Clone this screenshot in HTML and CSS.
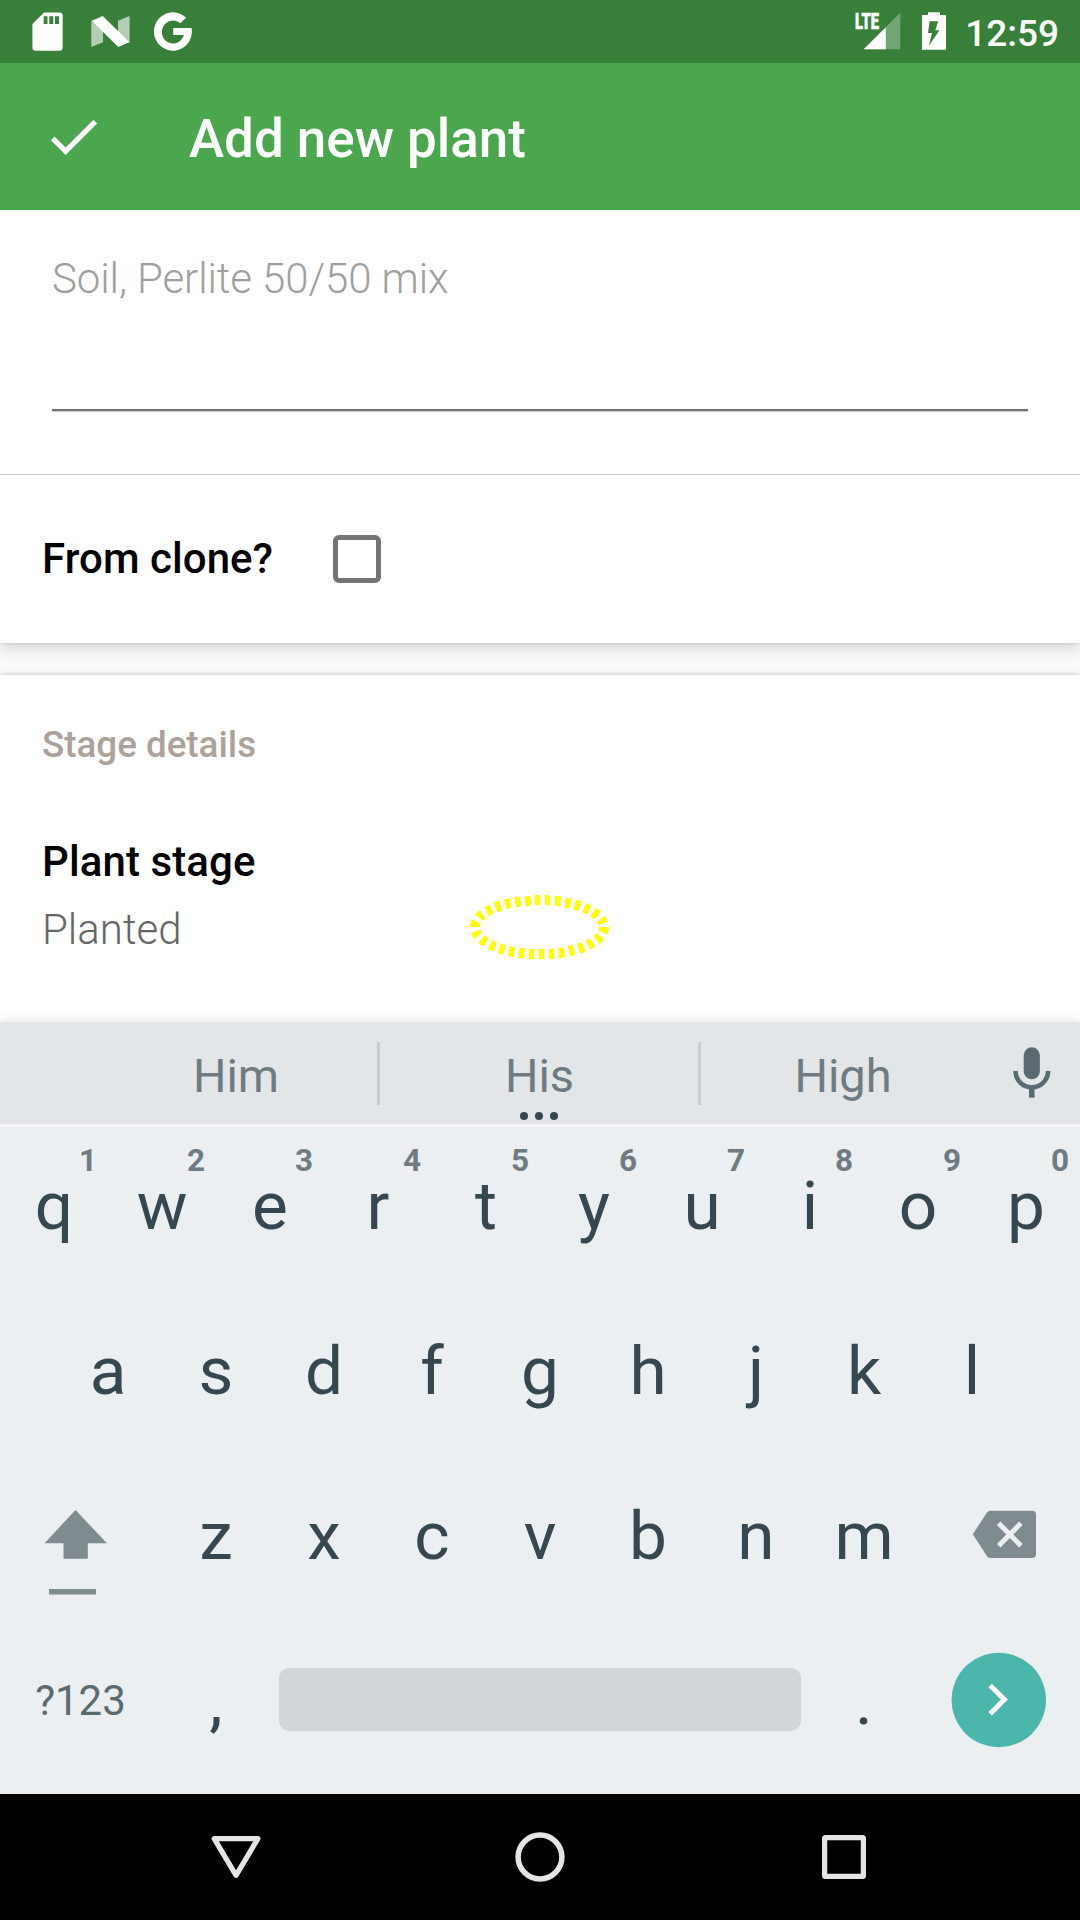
FILE: index.html
```html
<!DOCTYPE html>
<html lang="en">
<head>
<meta charset="utf-8">
<title>Add new plant</title>
<link rel="stylesheet" href="styles.css">
</head>
<body>
<div class="screen">
  <header class="status">
    <div class="status-left">
      <svg width="31" height="40" viewBox="32 12 31 40"><path fill="#fff" fill-rule="evenodd" d="M44 12.4H59.5a3.2 3.2 0 0 1 3.2 3.2V47.500a3.200 3.200 0 0 1-3.200 3.200H35.600a3.200 3.200 0 0 1-3.200-3.200V24zM43.700 16.300V24h3.800v-7.700zM49.300 16.300V24h4v-7.700zM55 16.300V24h4v-7.700z"/></svg>
      <svg class="ic-n" width="39" height="40" viewBox="91 12 39 40"><path fill="#fff" fill-opacity=".62" d="M91.300 20.500 103 30V42.200L91.300 47zM118 20.700 129.600 16V42.500L118 33z"/><path fill="#fff" d="M91.800 20.700 102.700 16 129.500 42.200 118.200 47z"/></svg>
      <svg class="ic-g" width="38" height="40" viewBox="154 12 38 40"><path fill="#fff" d="M186.100 17.700A19 19.200 0 1 0 191.900 32Q191.900 30 191.600 28H173.200V35H183.900A11.200 11.500 0 1 1 180.400 23.300z"/></svg>
    </div>
    <div class="status-right">
      <svg class="ic-signal" width="46" height="40" viewBox="855 12 46 40"><path fill="#fff" fill-opacity=".3" d="M863.700 49.300 900.300 12.700V49.300z"/><path fill="#fff" d="M863.700 49.300 885.800 27.200V49.300z"/><text class="lte" x="855" y="29" textLength="24" lengthAdjust="spacingAndGlyphs">LTE</text></svg>
      <svg class="ic-bat" width="24" height="40" viewBox="922 12 24 40"><path fill="#fff" fill-rule="evenodd" d="M928 12.300H940V15H946V49.700H922V15H928zM929.600 21.300 928 33H932L928.900 45.700 939.400 30.300H935.300L938.200 21.300z"/></svg>
      <span class="clock">12:59</span>
    </div>
  </header>
  <div class="appbar">
    <svg width="63" height="63" viewBox="0 0 24 24"><path fill="#fff" d="M9 16.170 4.830 12l-1.420 1.410L9 19 21 7l-1.410-1.410z"/></svg>
    <h1>Add new plant</h1>
  </div>
  <main class="content">
    <section class="card card-general">
      <div class="field"><span>Soil, Perlite 50/50 mix</span></div>
      <div class="clone"><span>From clone?</span><i class="checkbox"></i></div>
    </section>
    <section class="card card-stage">
      <h2>Stage details</h2>
      <div class="label">Plant stage</div>
      <div class="value">Planted</div>
    </section>
    <svg class="marker" width="142" height="68" viewBox="469 893 142 68" shape-rendering="crispEdges"><ellipse cx="539.500" cy="927.200" rx="64.500" ry="27" fill="none" stroke="#ff0" stroke-width="10" stroke-dasharray="5.300 4.700"/></svg>
  </main>
  <div class="keyboard">
    <div class="suggest">
      <span>Him</span><span class="mid">His<svg class="dots" width="40" height="10" viewBox="0 0 40 10"><g fill="#37474f"><circle cx="5" cy="5" r="4"/><circle cx="20" cy="5" r="4"/><circle cx="35" cy="5" r="4"/></g></svg></span><span>High</span>
      <svg class="mic" width="38" height="52" viewBox="1013 1046 38 52"><rect x="1023.700" y="1047.300" width="16.200" height="32" rx="8.100" fill="#5b6a70"/><path fill="none" stroke="#5b6a70" stroke-width="4.600" d="M1015.500 1071a16.300 16.300 0 0 0 32.600 0"/><path fill="#5b6a70" d="M1029 1087h5.600v10.700H1029z"/></svg>
    </div>
    <div class="row row-top">
      <span>q<sup>1</sup></span><span>w<sup>2</sup></span><span>e<sup>3</sup></span><span>r<sup>4</sup></span><span>t<sup>5</sup></span><span>y<sup>6</sup></span><span>u<sup>7</sup></span><span>i<sup>8</sup></span><span>o<sup>9</sup></span><span>p<sup>0</sup></span>
    </div>
    <div class="row row-home">
      <span>a</span><span>s</span><span>d</span><span>f</span><span>g</span><span>h</span><span>j</span><span>k</span><span>l</span>
    </div>
    <div class="row row-low">
      <svg width="162" height="165" viewBox="0 1453 162 165"><path fill="#808b8f" d="M75.500 1510 106.900 1543.200H87.800V1558.700H63.500V1543.200H44.500zM49 1589H96v5.500H49z"/></svg>
      <span>z</span><span>x</span><span>c</span><span>v</span><span>b</span><span>n</span><span>m</span>
      <svg width="162" height="165" viewBox="918 1453 162 165"><path fill="#808b8f" d="M972.800 1534.300 987 1512.500Q988.300 1510.700 990.500 1510.700H1032a4 4 0 0 1 4 4V1554a4 4 0 0 1-4 4H990.500Q988.300 1558 987 1556.200z"/><path fill="none" stroke="#ebeff2" stroke-width="5" d="M998.700 1523.300 1020.900 1545.700M1020.900 1523.300 998.700 1545.700"/></svg>
    </div>
    <div class="row row-space">
      <span class="sym">?123</span><span class="comma">,</span><i class="space"></i><span class="period">.</span>
      <svg width="162" height="165" viewBox="918 1618 162 165"><ellipse cx="998.800" cy="1700" rx="47.200" ry="47.200" fill="#4db6ac"/><path fill="none" stroke="#fff" stroke-width="5" d="M990.200 1685.500 1004.400 1699.600 990.200 1713.700"/></svg>
    </div>
  </div>
  <nav class="navbar">
    <svg width="304" height="126" viewBox="84 1794 304 126"><path fill="none" stroke="#e5e5e5" stroke-width="5.200" stroke-linejoin="round" d="M214.200 1838.700H257.900L236.050 1875.300z"/></svg>
    <svg width="304" height="126" viewBox="388 1794 304 126"><circle cx="540" cy="1857" r="21.900" fill="none" stroke="#e5e5e5" stroke-width="5.500"/></svg>
    <svg width="304" height="126" viewBox="692 1794 304 126"><rect x="824.600" y="1837.600" width="38.800" height="38.800" rx="1" fill="none" stroke="#e5e5e5" stroke-width="5.200"/></svg>
  </nav>
</div>
</body>
</html>
```
FILE: styles.css
```css
* { box-sizing: border-box; }
body { margin: 0; font-family: Roboto, "Liberation Sans", sans-serif; }
svg { display: block; flex: none; }
.screen { width: 1080px; height: 1920px; overflow: hidden; display: flex; flex-direction: column; background: #fafafa; }

.status { height: 63px; flex: none; background: #387f3a; display: flex; justify-content: space-between; padding: 12px 21px 0 32px; }
.status-left, .status-right { display: flex; }
.ic-n { margin-left: 28px; }
.ic-g { margin-left: 24px; }
.ic-signal { overflow: visible; }
.ic-bat { margin: 0 19px 0 21px; }
.clock { color: #fff; font-size: 37px; font-weight: 500; line-height: 44px; }
.lte { fill: #fff; stroke: #fff; stroke-width: .6px; font-size: 22px; font-weight: 900; }

.appbar { height: 147px; flex: none; position: relative; z-index: 1; background: #4ba74e; display: flex; align-items: center; padding-left: 42px; }
.appbar h1 { margin: 5px 0 0 84px; color: #fff; font-size: 53px; font-weight: 500; line-height: 60px; letter-spacing: -.05px; }

.content { height: 812px; flex: none; position: relative; }
.card { background: #fff; }
.card-general { height: 433px; box-shadow: 0 5px 14px rgba(0,0,0,.17), 0 0 3px rgba(0,0,0,.12); }
.field { height: 265px; padding: 38px 52px 0; border-bottom: 1px solid #ccc; }
.field span { display: block; height: 163px; border-bottom: 2px solid #757575; box-shadow: 0 1px #ccc; color: #9f9f9f; font-size: 42px; font-weight: 300; line-height: 62px; letter-spacing: -.1px; }
.clone { height: 168px; display: flex; align-items: center; padding-left: 42px; font-size: 42px; font-weight: 500; color: #000; }
.clone span { margin-top: -2px; letter-spacing: .05px; }
.checkbox { width: 48px; height: 48px; margin-left: 60px; border: 5.300px solid #757575; border-radius: 6px; }
.card-stage { height: 347px; margin-top: 32px; padding: 40px 42px 0; box-shadow: 0 0 5px rgba(0,0,0,.25); }
.card-stage h2 { margin: 0; font-size: 36.750px; font-weight: 500; line-height: 60px; color: #aca29a; }
.label { margin-top: 57px; font-size: 42px; font-weight: 500; line-height: 60px; letter-spacing: .1px; }
.value { margin-top: 8px; font-size: 42px; font-weight: 300; line-height: 60px; color: #666; }
.marker { position: absolute; left: 469px; top: 683px; }

.keyboard { height: 772px; flex: none; position: relative; background: #ebeff2; box-shadow: 0 -1px 10px rgba(0,0,0,.12); color: #37474f; }
.suggest { height: 105px; display: flex; align-items: center; padding-left: 94px; background: #e2e6e9; border-bottom: 3px solid #f5f7f8; }
.suggest span { width: 283px; height: 63px; margin-top: 1px; padding-left: 1px; font-size: 47px; line-height: 68px; text-align: center; color: #6f7b80; }
.suggest .mid { position: relative; width: 324px; border: solid #c9cdd0; border-width: 0 3px; }
.dots { position: absolute; left: 139px; top: 69px; }
.mic { margin: -2px 0 0 29px; }
.row { display: flex; height: 165px; font-size: 67.500px; line-height: 165px; text-align: center; }
.row span { width: 108px; flex: none; }
.row-top { height: 161px; line-height: 157px; }
.row-top span { position: relative; }
.row-top sup { position: absolute; left: 68px; top: 14px; width: 40px; font-size: 31.500px; font-weight: 700; line-height: 40px; color: #6f7b80; }
.row-home { padding-left: 54px; }
.row-space { align-items: center; }
.row-space .sym { width: 162px; padding-right: 1px; font-size: 42px; color: #5b6a70; }
.row-space .comma { width: 108px; }
.space { width: 522px; height: 63px; margin: -2px 9px 0; border-radius: 10px; background: #d1d6d9; }
.navbar { height: 126px; flex: none; background: #000; display: flex; padding-left: 84px; position: relative; }
```
